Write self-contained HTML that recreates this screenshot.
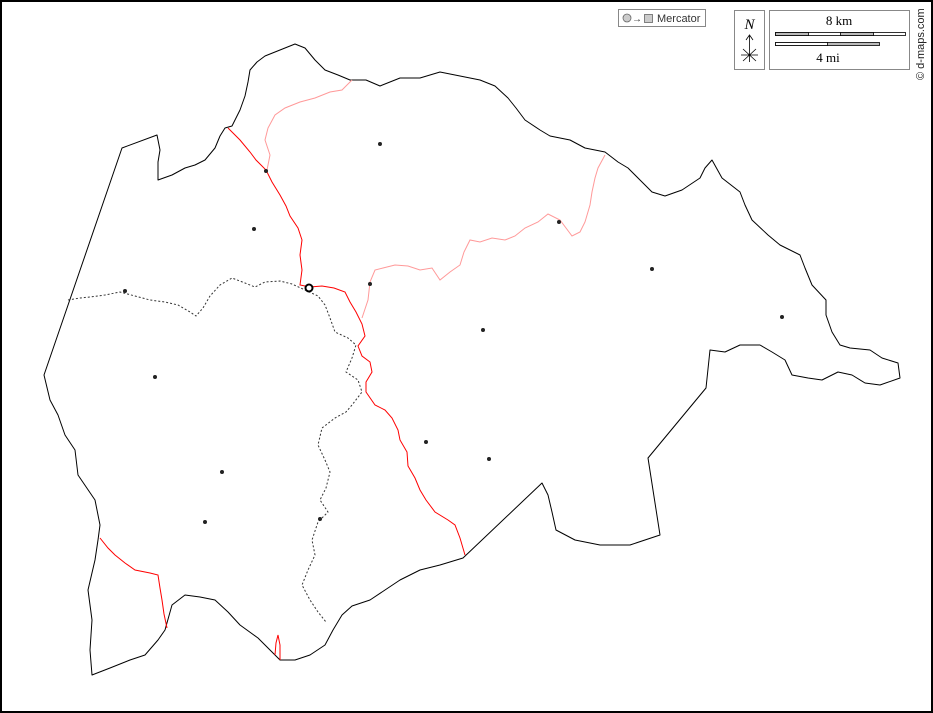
<!DOCTYPE html>
<html><head><meta charset="utf-8"><style>
html,body{margin:0;padding:0;background:#fff}
svg{display:block}
text{font-family:"Liberation Serif",serif}
</style></head><body>
<svg width="933" height="713" viewBox="0 0 933 713" xmlns="http://www.w3.org/2000/svg">
<rect x="1" y="1" width="931" height="711" fill="#fff" stroke="#000" stroke-width="2"/>
<!-- outline -->
<path fill="none" stroke="#000" stroke-width="1" stroke-linejoin="round" d="M157,135 L122,148 L44,375 L50,400 L58,415 L65,435 L75,450 L78,475 L95,500 L100,525 L98,540 L95,560 L88,590 L92,620 L90,650 L92,675 L110,668 L130,660 L145,655 L158,640 L165,630 L172,605 L185,595 L200,597 L215,600 L228,612 L240,625 L258,638 L270,650 L280,660 L295,660 L310,655 L325,645 L333,630 L342,615 L352,606 L370,600 L385,590 L400,580 L420,570 L440,565 L463,558 L542,483 L548,495 L552,512 L556,530 L575,540 L600,545 L630,545 L660,535 L648,458 L706,388 L710,350 L725,352 L740,345 L760,345 L772,352 L785,360 L792,375 L808,378 L822,380 L838,372 L852,375 L865,383 L880,385 L900,378 L898,363 L882,358 L870,350 L850,348 L840,345 L832,332 L826,315 L826,300 L812,285 L805,268 L800,255 L780,245 L768,235 L752,220 L745,205 L740,192 L722,178 L712,160 L705,168 L700,178 L682,190 L665,196 L652,192 L640,180 L628,168 L618,162 L605,152 L585,148 L570,140 L550,136 L540,130 L525,120 L516,108 L508,98 L495,86 L480,80 L460,76 L440,72 L420,78 L400,78 L380,86 L366,80 L350,80 L338,75 L325,70 L315,60 L305,48 L295,44 L280,50 L265,56 L257,62 L250,70 L248,82 L245,96 L240,110 L232,126 L225,128 L220,136 L215,148 L205,160 L195,165 L185,168 L172,175 L158,180 L158,162 L160,150 L157,135 Z"/>
<!-- dotted boundary -->
<path fill="none" stroke="#333" stroke-width="1" stroke-dasharray="2,2" d="M68,300 L80,298 L90,297 L105,295 L120,292 L135,296 L150,300 L165,302 L178,305 L190,312 L196,316 L203,308 L210,296 L220,285 L232,278 L245,283 L255,287 L265,282 L280,281 L292,284 L305,290 L318,296 L325,305 L330,318 L335,332 L348,338 L356,345 L352,358 L346,372 L358,380 L362,392 L352,405 L346,412 L335,418 L322,428 L318,445 L325,460 L330,472 L326,488 L320,500 L328,512 L318,522 L312,540 L315,555 L308,570 L302,585 L310,600 L318,612 L326,622"/>
<!-- red main river -->
<path fill="none" stroke="#f00" stroke-width="1" d="M228,128 L240,140 L250,152 L256,160 L266,170 L272,182 L280,195 L286,206 L290,216 L298,228 L302,240 L300,255 L302,270 L300,285 L310,287 L322,286 L334,288 L345,292 L350,302 L356,312 L362,324 L365,336 L358,346 L362,356 L370,362 L372,372 L366,382 L366,392 L375,405 L385,410 L392,418 L398,430 L400,440 L407,452 L408,466 L415,478 L420,490 L426,500 L435,512 L448,520 L455,525 L460,538 L465,555"/>
<!-- pink rivers -->
<path fill="none" stroke="#f99" stroke-width="1" d="M352,80 L342,90 L330,92 L315,98 L300,102 L285,108 L275,115 L268,128 L265,140 L270,155 L267,170"/>
<path fill="none" stroke="#f99" stroke-width="1" d="M605,155 L598,168 L595,178 L592,192 L590,205 L585,222 L580,232 L572,236 L566,228 L560,220 L548,214 L538,222 L525,228 L515,236 L505,240 L492,238 L480,242 L470,240 L464,252 L460,265 L450,272 L440,280 L432,268 L420,270 L408,266 L395,265 L383,268 L375,270 L370,282 L368,300 L362,318"/>
<!-- red lower-left -->
<path fill="none" stroke="#f00" stroke-width="1" d="M100,538 L108,548 L115,555 L125,563 L135,570 L150,573 L158,575 L160,588 L162,600 L164,614 L167,628"/>
<path fill="none" stroke="#f00" stroke-width="1" d="M275,655 L276,643 L278,635 L280,645 L280,660"/>
<!-- dots -->
<g fill="#222">
<circle cx="380" cy="144" r="2"/><circle cx="266" cy="171" r="2"/><circle cx="254" cy="229" r="2"/>
<circle cx="559" cy="222" r="2"/><circle cx="652" cy="269" r="2"/><circle cx="370" cy="284" r="2"/>
<circle cx="125" cy="291" r="2"/><circle cx="483" cy="330" r="2"/><circle cx="782" cy="317" r="2"/>
<circle cx="155" cy="377" r="2"/><circle cx="426" cy="442" r="2"/><circle cx="489" cy="459" r="2"/>
<circle cx="222" cy="472" r="2"/><circle cx="205" cy="522" r="2"/><circle cx="320" cy="519" r="2"/>
</g>
<circle cx="309" cy="288" r="3.5" fill="#fff" stroke="#000" stroke-width="2"/>
<!-- Mercator legend -->
<rect x="618.5" y="9.5" width="87" height="17" fill="#fff" stroke="#888"/>
<circle cx="627" cy="18" r="4" fill="#ccc" stroke="#666" stroke-width="0.8"/>
<text x="632" y="22" font-size="10" font-family="Liberation Sans,sans-serif" fill="#333">→</text>
<rect x="644.5" y="14.5" width="8" height="8" fill="#ccc" stroke="#666" stroke-width="0.8"/>
<text x="657" y="22" font-size="11" style="font-family:'Liberation Sans',sans-serif" fill="#333">Mercator</text>
<!-- north -->
<rect x="734.5" y="10.5" width="30" height="59" fill="#fff" stroke="#888"/>
<text x="749.5" y="29" font-size="15" font-style="italic" text-anchor="middle">N</text>
<path d="M749.5,36 V62 M746,40 L749.5,35 L753,40 M741,55 H758 M743,49 L756,61 M756,49 L743,61" stroke="#000" stroke-width="0.8" fill="none"/>
<!-- scale -->
<rect x="769.5" y="10.5" width="140" height="59" fill="#fff" stroke="#888"/>
<text x="839" y="25" font-size="13" text-anchor="middle">8 km</text>
<rect x="775.5" y="32.5" width="130" height="3" fill="#fff" stroke="#000" stroke-width="0.8"/>
<rect x="775.5" y="32.5" width="33" height="3" fill="#bbb" stroke="#000" stroke-width="0.8"/>
<rect x="840.5" y="32.5" width="33" height="3" fill="#bbb" stroke="#000" stroke-width="0.8"/>
<rect x="775.5" y="42.5" width="104" height="3" fill="#bbb" stroke="#000" stroke-width="0.8"/>
<rect x="775.5" y="42.5" width="52" height="3" fill="#fff" stroke="#000" stroke-width="0.8"/>
<text x="828" y="62" font-size="13" text-anchor="middle">4 mi</text>
<text transform="translate(924,80) rotate(-90)" font-size="11" style="font-family:'Liberation Sans',sans-serif" fill="#222">© d-maps.com</text>
</svg>
</body></html>
